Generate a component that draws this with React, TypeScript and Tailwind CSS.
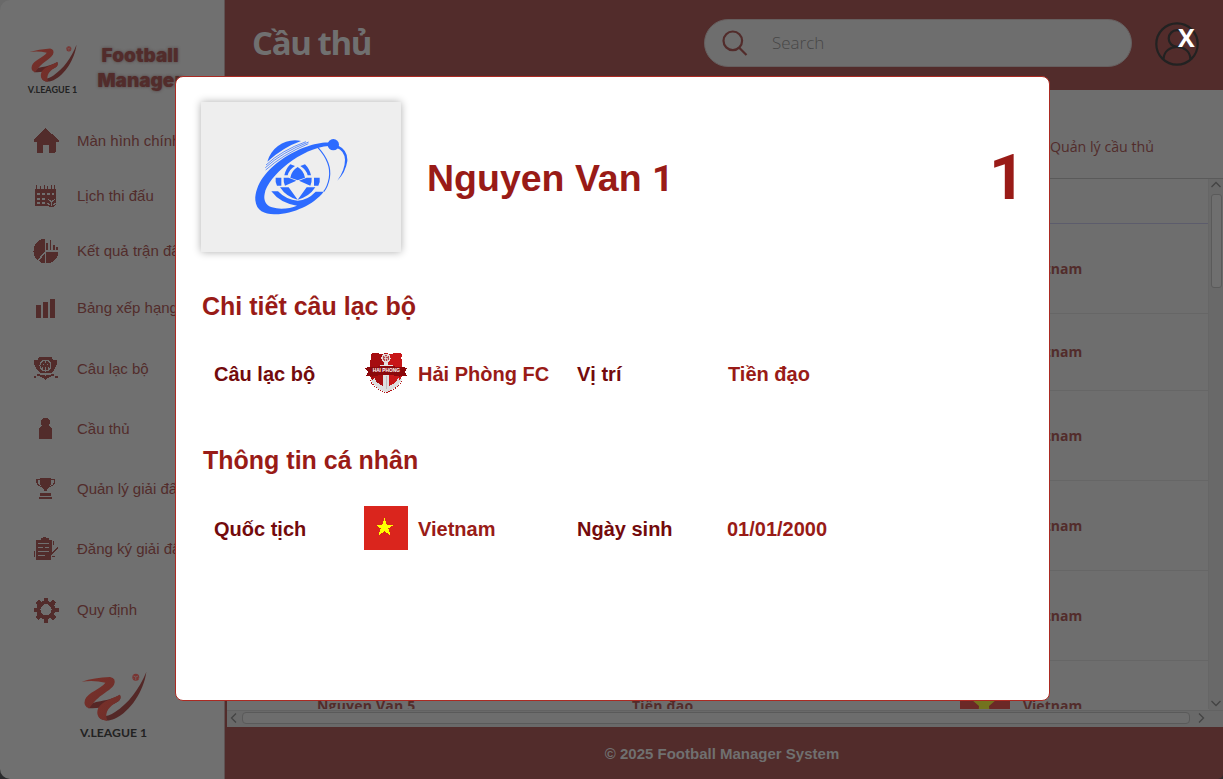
import React from 'react';

const INK = '#522c2b';

function LeagueMark({ id, className }: { id: string; className: string }) {
  return (
    <svg viewBox="0 0 200 150" preserveAspectRatio="none" className={className}>
      <defs>
        <linearGradient id={id} x1="0" y1="0" x2="1" y2="1">
          <stop offset="0" stopColor="#7a3029" />
          <stop offset="1" stopColor="#6b2f2b" />
        </linearGradient>
      </defs>
      <path d="M55 130 C62 142 84 136 102 124 C145 96 175 56 198 3 C190 60 150 122 102 143 C80 153 58 148 54 136Z" fill="#542827" />
      <path d="M22 112 C22 98 40 94 50 92 C75 88 100 82 118 71 Q124 84 110 93 C84 108 55 112 22 112Z" fill="#572625" />
      <path d="M2 32 Q40 20 88 18 Q108 22 100 41 C88 62 52 70 25 112 Q6 106 12 86 C20 64 60 54 74 35 Q40 27 2 32Z" fill={`url(#${id})`} />
      <path d="M118 71 Q125 86 108 94 C90 104 68 122 80 149 C54 149 44 132 52 112 C64 88 100 82 118 71Z" fill={`url(#${id})`} />
      <circle cx="166" cy="19" r="10.5" fill="#7a3431" />
      <path d="M159 15 L166 18 L173 15 M166 18 V27 M159 23 l-2 -2 M173 23 l2 -2" stroke="#707070" strokeWidth="2" fill="none" />
    </svg>
  );
}

function MenuIcon({ name }: { name: string }) {
  return (
    <svg viewBox="0 0 26 26" className="h-[26px] w-[26px] shrink-0" fill={INK} stroke="none" shapeRendering="crispEdges">
      {name === 'home' && <path d="M12.5 0 L25.5 12 V13.5 H22.5 V24 Q22.5 25 21.5 25 H16 V17 H10 V25 H4.500 Q3.500 25 3.500 24 V13.500 H0.500 V12Z" />}
      {name === 'calendar' && (
        <>
          <path fillRule="evenodd" d="M2 6 H23 V16 H15 V23 H2Z M4 10 V12 H7 V10Z M9 10 V12 H12 V10Z M14 10 V12 H17 V10Z M19 10 V12 H21 V10Z M4 15 V17 H7 V15Z M9 15 V17 H12 V15Z M4 19 V21 H7 V19Z M9 19 V21 H12 V19Z" />
          <path d="M3.500 2 V6 M7.500 3 V6 M11.500 2 V6 M14.500 3 V6 M18.500 2 V6 M21.500 2 V6" stroke={INK} strokeWidth="1" />
          <circle cx="18.500" cy="19" r="5" />
          <path d="M15 16 L18.500 19 L22 16 M18.500 19 V23 M14.500 20 l2 2 M22.500 20 l-2 2" stroke="#707070" strokeWidth="1" fill="none" />
        </>
      )}
      {name === 'pie' && (
        <>
          <path d="M12 0.500 A12.500 12.500 0 0 0 4.500 22 L12 13Z" />
          <path d="M12 15 V25.500 Q8 25.500 6 23Z M13 14 H25.500 A12.500 12.500 0 0 1 13 25.500Z" />
          <path d="M13 5 H15 V12 H13Z M17 2 H18 V12 H17Z M20 7 H22 V12 H20Z M23 9 H25 V12 H23Z" />
        </>
      )}
      {name === 'bars' && <path d="M3 9 H8 V22 H3Z M10 6 H15 V22 H10Z M17 3 H22 V22 H17Z" />}
      {name === 'crest' && (
        <>
          <path d="M6 1 H19 L20 4 H24 V9 H23 Q22 15 18 17 H8 Q3 15 2 9 H1 V4 H5Z" />
          <circle cx="12.500" cy="9.500" r="5.500" fill="none" stroke="#707070" strokeWidth="1" />
          <path d="M12.500 4 V7 M10 8 H11 M14 8 H15 M9 13 L10 11 M16 13 L15 11 M12.500 11 V15" fill="none" stroke="#707070" strokeWidth="1" />
          <path d="M4 18 H21 V20 H25 V22 H22 V20 Q16 20 12.500 24 Q9 20 3 20 V22 H0.500 V20 H4Z" />
          <path d="M7 18 Q12.500 20 18 18" stroke="#707070" fill="none" />
        </>
      )}
      {name === 'player' && <path d="M12.500 2 A4.500 4.500 0 0 1 16 9.500 L18 11 Q19 12 19 14 V23 H6 V14 Q6 12 7 11 L9 9.500 A4.500 4.500 0 0 1 12.500 2Z" />}
      {name === 'trophy' && (
        <>
          <path d="M7 2 H18 V7 Q18 11 14 13.500 V15 H11 V13.500 Q7 11 7 7Z M7 17 H18 V20 H7Z M6 21 H19 V23 H6Z" />
          <path d="M7 3.500 H4 V6 Q4 9 8 10.500 M18 3.500 H21.500 V6 Q21.500 9 17 10.500" fill="none" stroke={INK} strokeWidth="1.200" />
        </>
      )}
      {name === 'register' && (
        <>
          <path d="M3 4 H8 V2 H10 V1 H13 V2 H16 V4 H19 V16 L24 11 L25.500 12 L18 19 V23.500 H3Z" />
          <path d="M5 7.500 H16 M5 11.500 H10 M12 11.500 H16 M5 15.500 H16 M5 19.500 H12" stroke="#707070" strokeWidth="1" />
          <path d="M20.500 5 V9 M1.500 15 V21 M19 20.500 H22" stroke={INK} strokeWidth="1" />
        </>
      )}
      {name === 'gear' && (
        <path
          fillRule="evenodd"
          d="M10.500 0.500 H15 V4 L17.500 5 L20 2.500 L23 5.500 L21 8.500 L22 10.500 H25.500 V15 H22 L21 17.500 L23 20 L20 23 L17.500 21 L15 22 V25.500 H10.500 V22 L8 21 L5.500 23 L2.500 20 L4.500 17.500 L3.500 15 H0.500 V10.500 H3.500 L4.500 8.500 L2.500 5.500 L5.500 2.500 L8 5 L10.500 4Z M13 7.200 A5.600 5.600 0 1 0 13 18.400 A5.600 5.600 0 1 0 13 7.200Z"
        />
      )}
    </svg>
  );
}

const menu = [
  { icon: 'home', label: 'Màn hình chính', h: 'h-[54px]' },
  { icon: 'calendar', label: 'Lịch thi đấu', h: 'h-[56px]' },
  { icon: 'pie', label: 'Kết quả trận đấu', h: 'h-[54px]' },
  { icon: 'bars', label: 'Bảng xếp hạng', h: 'h-[61px]' },
  { icon: 'crest', label: 'Câu lạc bộ', h: 'h-[60px]' },
  { icon: 'player', label: 'Cầu thủ', h: 'h-[60px]' },
  { icon: 'trophy', label: 'Quản lý giải đấu', h: 'h-[60px]' },
  { icon: 'register', label: 'Đăng ký giải đấu', h: 'h-[60px]' },
  { icon: 'gear', label: 'Quy định', h: 'h-[62px]' },
];

function Sidebar() {
  return (
    <aside className="flex h-full w-[225px] shrink-0 flex-col rounded-l-[10px] border-r border-[#5f5353] bg-[#707070]">
      <div className="flex h-[114px] items-start pl-[28px] pt-[44px]">
        <div className="flex w-[49px] flex-col items-center">
          <LeagueMark id="markTop" className="h-[38px] w-[48px]" />
          <span className="mt-[2px] whitespace-nowrap font-['Lato'] text-[9px] font-bold leading-[11px] text-[#222]">V.LEAGUE 1</span>
        </div>
        <div className="ml-[18px] -mt-px w-[90px] text-center font-['Inter'] text-[19px] font-black leading-[25px] text-[#522c2b] [text-shadow:0_0_3px_rgba(60,30,30,0.6)]">
          Football Manager
        </div>
      </div>
      <nav className="flex flex-col">
        {menu.map((m) => (
          <div key={m.label} className={`flex items-center gap-[18px] pl-[33px] ${m.h}`}>
            <MenuIcon name={m.icon} />
            <span className="whitespace-nowrap text-[15px] text-[#522c2b]">{m.label}</span>
          </div>
        ))}
      </nav>
      <div className="ml-[80px] mt-[30px] flex w-[67px] flex-col items-center self-start">
        <LeagueMark id="markBottom" className="h-[50px] w-[66px]" />
        <span className="mt-[4px] whitespace-nowrap font-['Lato'] text-[12.200px] font-bold leading-[15px] text-[#222]">V.LEAGUE 1</span>
      </div>
    </aside>
  );
}

function Header() {
  return (
    <header className="flex h-[90px] shrink-0 items-center bg-[#522c2b] pb-[4px] pl-[27px]">
      <h1 className="w-[452px] font-['Open_Sans'] text-[33px] font-bold leading-[44px] tracking-[-1.4px] text-[#707070]">Cầu thủ</h1>
      <div className="flex h-[48px] w-[428px] items-center rounded-full border border-[#665f5f] bg-[#6e6e6e] pl-[17px]">
        <svg viewBox="0 0 26 26" className="h-[26px] w-[26px]" fill="none" stroke="#522c2b" strokeWidth="2.200">
          <circle cx="10.800" cy="10.800" r="9.300" />
          <path d="M17.500 18 L24.500 25" />
        </svg>
        <span className="ml-[24px] font-['Open_Sans'] text-[17px] font-light text-[#474747]">Search</span>
      </div>
      <svg viewBox="0 0 44 44" className="ml-[23px] mt-[2px] h-[44px] w-[44px]" fill="none" stroke="#222" strokeWidth="2.200">
        <circle cx="22" cy="22" r="20.700" />
        <circle cx="22" cy="16.500" r="8.300" />
        <path d="M8.500 37 C9 29 15 25 22 25 S35 29 35.500 37" />
      </svg>
    </header>
  );
}

const rows = [
  'h-[90px]',
  'h-[77px] pb-[2px]',
  'h-[90px]',
  'h-[90px]',
  'h-[90px]',
];

function Chevron({ d }: { d: string }) {
  return (
    <svg viewBox="0 0 12 12" className="h-[12px] w-[12px] shrink-0" fill="none" stroke="#444" strokeWidth="1.300">
      <path d={d} />
    </svg>
  );
}

function PlayerTable() {
  return (
    <section className="ml-[2px] flex h-[549px] flex-col border-t border-[#5a5a5a] bg-[#6e6e6e]">
      <div className="flex h-[531px]">
        <div className="h-[530px] w-[982px] shrink-0 overflow-hidden border-r border-[#666] font-['Open_Sans'] text-[14px] font-bold text-[#522c2b]">
          <div className="h-[45px] border-b border-[#5c5c6c]" />
          {rows.map((h, i) => (
            <div key={i} className={`flex items-center border-b border-[#666] pl-[796px] ${h}`}>
              <span>Vietnam</span>
            </div>
          ))}
          <div className="flex h-[88px] items-center">
            <span className="w-[315px] pl-[90px] tracking-[0.200px]">Nguyen Van 5</span>
            <span className="w-[328px] pl-[90px] tracking-[0.200px]">Tiền đạo</span>
            <span className="flex items-center gap-[13px] pl-[90px]">
              <svg viewBox="0 0 50 44" className="h-[44px] w-[50px]">
                <path fill="#6b2927" d="M0 0H50V44H0Z" />
                <path fill="#73731f" d="M24 8 L28 17 H36 L29 23 L30 35 L24 28 L18 35 L19 23 L12 17 H20Z" />
              </svg>
              Vietnam
            </span>
          </div>
        </div>
        <div className="flex w-[14px] flex-col items-center bg-[#696969]">
          <Chevron d="M1.500 8 L6 3.500 L10.500 8" />
          <div className="mt-[3px] h-[94px] w-[11px] rounded-[3px] border border-[#5a5a5a] bg-[#6f6f6f]" />
          <div className="grow" />
          <Chevron d="M1.500 3 L6 7.500 L10.500 3" />
        </div>
      </div>
      <div className="flex h-[17px] items-center border-t border-[#626262] bg-[#696969] pb-[2px] pl-px">
        <Chevron d="M8 1.500 L3.500 6 L8 10.500" />
        <div className="ml-[2px] h-[12px] w-[948px] rounded-[4px] border border-[#5a5a5a] bg-[#6d6d6d]" />
        <div className="ml-[5px] flex">
          <Chevron d="M4 1.500 L8.500 6 L4 10.500" />
        </div>
      </div>
    </section>
  );
}

function OrbitLogo() {
  return (
    <svg viewBox="224 178 279 228" className="h-[76px] w-[93px]" fill="#2d6bff">
      <path d="M446 189 C375 185 225 262 225 362 C228 395 255 405 285 404 C340 402 400 375 430 336 L406 336 Q381 362 352 363 Q318 361 293 335 L273 335 Q300 371 350 378 C330 386 300 391 275 383 C255 376 249 360 253 342 C262 290 365 203 446 199Z" />
      <circle cx="459" cy="195" r="17" />
      <path d="M472 197 Q503 212 501 244 Q496 278 471 303 Q494 270 494 240 Q492 212 468 204Z" />
      <path d="M413 204 Q455 250 447 295 Q442 322 430 336" fill="none" stroke="#2d6bff" strokeWidth="3.500" />
      <path d="M261 246 C274 200 320 174 362 184 Q308 203 261 246Z" />
      <path d="M257 256 Q304 212 377 186 M255 264 Q306 217 385 187 M256 271 Q308 224 384 192" fill="none" stroke="#2d6bff" strokeWidth="2.200" />
      <path d="M286 294 H303 V318 H290 Q284 306 286 294Z M401 294 H418 Q420 306 414 318 H401Z M330 254 L344 259 Q326 270 322 287 H312 Q316 268 330 254Z M374 254 L360 259 Q378 270 382 287 H392 Q388 268 374 254Z M352 262 Q370 272 374 294 L352 302 L330 294 Q334 272 352 262Z M310 294 H325 L348 303 L314 318 Q309 306 310 294Z M394 294 H379 L356 303 L390 318 Q395 306 394 294Z M299 323 H325 L352 360 Q318 352 299 323Z M405 323 H379 L352 360 Q386 352 405 323Z" />
      <path d="M352 302 L374 318 L352 352 L330 318Z" fill="#eee" />
    </svg>
  );
}

function ClubCrest() {
  return (
    <svg viewBox="72 64 132 126" className="h-[42px] w-[44px]" shapeRendering="crispEdges">
      <path d="M92 70 Q105 64 115 68 Q127 72 138 66 Q150 72 160 68 Q175 64 186 70 Q182 82 186 96 V135 Q180 165 138 184 Q96 165 90 135 V96 Q94 82 92 70Z" fill="#c81618" />
      <path d="M92 70 Q105 64 115 68 Q127 72 138 66 V184 Q96 165 90 135 V96 Q94 82 92 70Z" fill="#a60d10" />
      <path d="M91 144 Q97 169 138 185 Q179 169 187 144 L178 148 L174 140 Q170 158 147 166 V130 H130 V166 Q106 158 104 140 L98 148Z" fill="#dedede" />
      <path d="M91 148 Q98 171 138 186 Q179 171 186 148" fill="none" stroke="#b31416" strokeWidth="3" strokeDasharray="4 3" />
      <path d="M132 91 H145 V102 H158 V107 H120 V102 H132Z" fill="#e2e2e2" />
      <circle cx="138" cy="83" r="14" fill="#e3d9d9" />
      <circle cx="138" cy="83" r="9" fill="#b5484a" />
      <path d="M133 78 H143 M133 83 H142 M136 78 V90 M141 83 V90" stroke="#eee" strokeWidth="2" />
      <path d="M74 113 Q85 108 96 110 Q138 102 182 110 Q190 108 202 113 L194 123 L200 135 Q188 134 180 138 Q138 127 98 138 Q90 134 78 135 L84 123Z" fill="#8b080b" />
      <text x="139" y="125" textAnchor="middle" fontSize="15" fontWeight="bold" fill="#fff" fontFamily="Liberation Sans" textLength="82" lengthAdjust="spacingAndGlyphs">HAI PHONG</text>
      <path d="M138 136 V176" stroke="#bcbcbc" strokeWidth="3" />
    </svg>
  );
}

function PlayerModal() {
  return (
    <div className="absolute left-[175px] top-[76px] flex h-[625px] w-[875px] flex-col rounded-[8px] border border-[#ab2a22] bg-white pl-[25px] font-bold text-[#991b17]">
      <div className="mt-[25px] flex h-[150px]">
        <div className="flex h-[150px] w-[200px] items-center justify-center bg-[#eee] shadow-[0_0_8px_rgba(0,0,0,0.32)]">
          <OrbitLogo />
        </div>
        <div className="ml-[26px] mt-[54px] w-[562px] text-[37.500px] leading-[44px]">
          Nguyen Van <span className="font-['Roboto']">1</span>
        </div>
        <div className="mt-[40px] font-['Roboto'] text-[63px] leading-[72px]">1</div>
      </div>
      <h2 className="mt-[38px] pl-px text-[25px] leading-[32px]">Chi tiết câu lạc bộ</h2>
      <div className="mt-[28px] flex h-[48px] items-center pl-[13px] text-[20px]">
        <span className="w-[150px] text-[#730a0c]">Câu lạc bộ</span>
        <div className="pb-[2px]">
          <ClubCrest />
        </div>
        <span className="ml-[10px] w-[159px]">Hải Phòng FC</span>
        <span className="w-[151px] text-[#730a0c]">Vị trí</span>
        <span>Tiền đạo</span>
      </div>
      <h2 className="mt-[46px] pl-[2px] text-[25px] leading-[32px]">Thông tin cá nhân</h2>
      <div className="mt-[29px] flex h-[48px] items-center pl-[13px] text-[20px]">
        <span className="w-[150px] text-[#730a0c]">Quốc tịch</span>
        <svg viewBox="0 0 44 44" className="-mt-[2px] h-[44px] w-[44px]" shapeRendering="crispEdges">
          <path fill="#da251d" d="M0 0H44V44H0Z" />
          <path fill="#ff0" d="M20.500 12 L22.700 18.500 H30 L24.200 22.500 L26.500 29.200 L20.500 25.200 L14.500 29.200 L16.800 22.500 L11.500 18.500 H18.300Z" />
        </svg>
        <span className="ml-[10px] w-[159px]">Vietnam</span>
        <span className="w-[150px] text-[#730a0c]">Ngày sinh</span>
        <span>01/01/2000</span>
      </div>
    </div>
  );
}

export default function App() {
  return (
    <div className="relative flex h-[779px] w-[1223px] overflow-hidden bg-[#2b2b2d] font-['Liberation_Sans',sans-serif]">
      <div className="absolute left-0 top-0 h-[20px] w-[20px] bg-[#696969]" />
      <div className="relative flex h-full w-full">
        <Sidebar />
        <main className="flex grow flex-col overflow-hidden rounded-br-[5px] bg-[#522c2b]">
          <Header />
          <div className="flex h-[88px] shrink-0 items-center bg-[#6e6e6e] pl-[825px] pt-[25px]">
            <span className="font-['Open_Sans'] text-[14.200px] text-[#522c2b]">Quản lý cầu thủ</span>
          </div>
          <PlayerTable />
          <footer className="flex grow items-center justify-center pr-[4px] pt-[2px] text-[15px] font-bold text-[#707070]">
            © 2025 Football Manager System
          </footer>
        </main>
      </div>
      <PlayerModal />
      <button className="absolute left-[1178px] top-[22px] font-['Open_Sans'] text-[25px] font-bold leading-[30px] text-white">X</button>
    </div>
  );
}
